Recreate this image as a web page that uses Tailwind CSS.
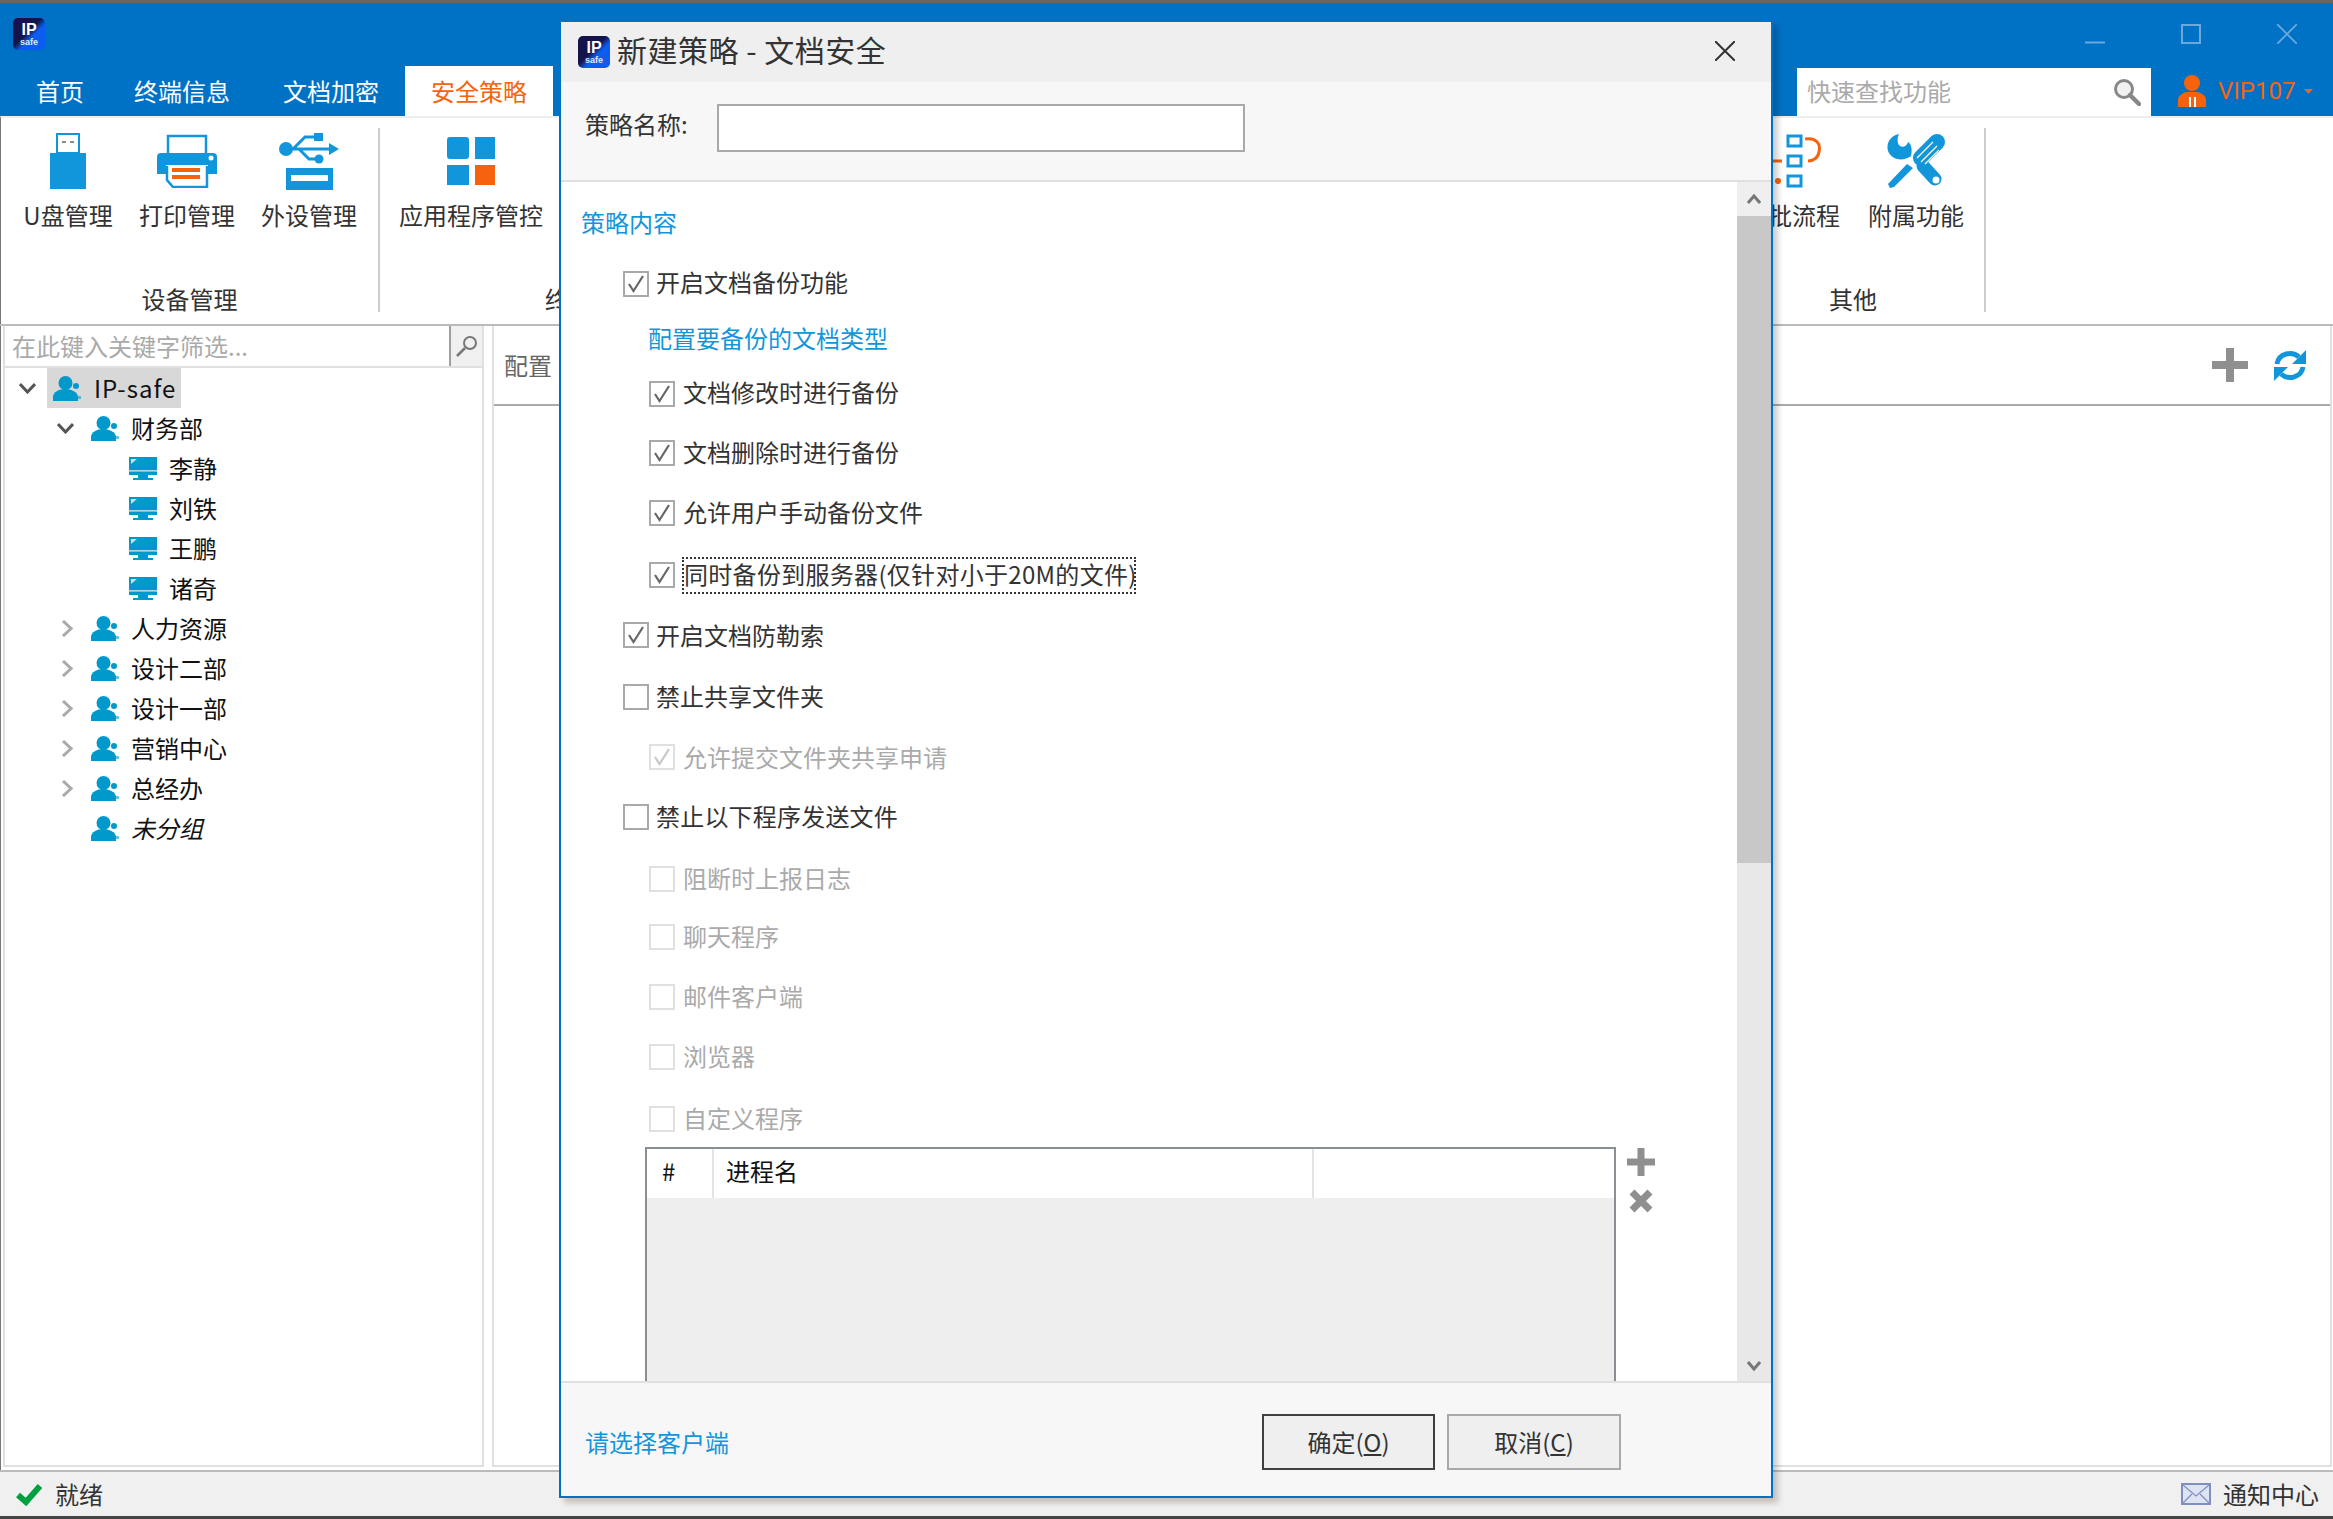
<!DOCTYPE html>
<html lang="zh-CN">
<head>
  <meta charset="UTF-8">
  <title>IP-guard</title>
  <script src="https://cdn.jsdelivr.net/npm/@tailwindcss/browser@4"></script>
</head>
<body class="bg-white font-['Noto_Sans_CJK_SC','Noto_Sans',sans-serif] text-[24px] leading-[32px] text-[#333]">

  <svg width="0" height="0" class="absolute">
    <defs><linearGradient id="logoGrad" x1="0" y1="0" x2="1" y2="1"><stop offset="0.45" stop-color="#14144a"/><stop offset="0.6" stop-color="#0b5cf0"/></linearGradient></defs>
    <symbol id="group" viewBox="0 0 28 25">
      <circle cx="12.5" cy="7" r="7" fill="#0099cc"/>
      <path d="M0 25v-4c0-5 6-8 12-8s13 3 13 8v4z" fill="#0099cc"/>
      <circle cx="23" cy="10" r="3" fill="#0099cc"/>
      <rect x="25" y="20" width="3" height="3" fill="#0099cc" opacity=".6"/>
    </symbol>
    <symbol id="monitor" viewBox="0 0 28 23">
      <rect width="28" height="13" fill="#0099cc"/>
      <rect y="13" width="28" height="1.5" fill="#a8d8ea"/>
      <rect y="14.5" width="28" height="3.5" fill="#0099cc"/>
      <rect x="9" y="18" width="10" height="3" fill="#0099cc"/>
      <rect x="4" y="21" width="20" height="2" fill="#0099cc"/>
      <path d="M2 7V2h6z" fill="#c5e6f2"/>
    </symbol>
    <symbol id="tick" viewBox="0 0 26 26">
      <path d="M6 13l4.500 7L20 5" fill="none" stroke="currentColor" stroke-width="2.200"/>
    </symbol>
  </svg>

  <div class="relative flex h-[1519px] w-[2333px] flex-col overflow-hidden">
    <div class="h-[3px] bg-[#666]"></div>

    <!-- title row -->
    <div class="flex h-[63px] items-start bg-[#0072c6] pl-[13px] pt-[15px]">
      <svg class="h-[32px] w-[32px]" viewBox="0 0 32 32">
        <rect width="32" height="32" rx="5" fill="url(#logoGrad)"/>
        <text x="16" y="17" text-anchor="middle" font-family="Liberation Sans" font-size="16" font-weight="700" fill="#fff">IP</text>
        <text x="16" y="27" text-anchor="middle" font-family="Liberation Sans" font-size="9" font-weight="700" fill="#dfe9ff">safe</text>
      </svg>
      <div class="ml-auto flex text-[#6aa9dc]">
        <svg class="mr-[76px] mt-[6px] h-[20px] w-[20px]" viewBox="0 0 20 20"><path d="M0 18.500h20" stroke="currentColor" stroke-width="2"/></svg>
        <svg class="mr-[76px] mt-[6px] h-[20px] w-[20px]" viewBox="0 0 20 20"><rect x="1" y="1" width="18" height="18" fill="none" stroke="currentColor" stroke-width="2"/></svg>
        <svg class="mr-[36px] mt-[6px] h-[20px] w-[20px]" viewBox="0 0 20 20"><path d="M0 0l20 20M20 0L0 20" stroke="currentColor" stroke-width="1.800"/></svg>
      </div>
    </div>

    <!-- tabs -->
    <div class="flex h-[50px] bg-[#0072c6] text-white">
      <div class="flex items-center pl-[36px]">首页</div>
      <div class="flex items-center pl-[50px]">终端信息</div>
      <div class="flex items-center pl-[53px]">文档加密</div>
      <div class="ml-[26px] flex w-[148px] items-center justify-center bg-white text-[#f7630c]">安全策略</div>
      <div class="ml-auto mt-[2px] flex h-[48px] w-[354px] items-center justify-between bg-white pl-[10px] pr-[10px] text-[#aaa]">
        <span class="pb-[2px]">快速查找功能</span>
        <svg class="h-[28px] w-[28px]" viewBox="0 0 28 28"><circle cx="11" cy="11" r="8.500" fill="#f2f2f2" stroke="#888" stroke-width="3"/><path d="M17 17l9 9" stroke="#888" stroke-width="4.500" stroke-linecap="round"/></svg>
      </div>
      <div class="flex w-[182px] items-center pl-[26px] text-[#f7630c]">
        <svg class="h-[32px] w-[30px]" viewBox="0 0 30 32"><circle cx="15" cy="8" r="8" fill="#f7630c"/><path d="M1 32v-7c0-5 6-8 10-8h8c4 0 10 3 10 8v7z" fill="#f7630c"/><path d="M12 22h2v10h-2zM17 22h2v10h-2z" fill="#fff"/></svg>
        <span class="ml-[11px] font-['Roboto',sans-serif]">VIP107</span>
        <svg class="ml-[9px] h-[5px] w-[9px]" viewBox="0 0 9 5"><path d="M0 0h9L4.500 5z" fill="#f7630c"/></svg>
      </div>
    </div>

    <!-- ribbon -->
    <div class="flex h-[208px] border-l border-t-2 border-l-[#777] border-t-[#eee] bg-white">
      <div class="flex w-[377px] flex-col">
        <div class="flex pl-[19px] pt-[14px]">
          <div class="flex w-[96px] flex-col items-center">
            <div class="flex h-[58px] items-center">
              <svg class="h-[56px] w-[36px]" viewBox="0 0 36 56"><rect y="20" width="36" height="36" fill="#1296db"/><rect x="7" y="1" width="22" height="19" fill="#fff" stroke="#1296db" stroke-width="2"/><path d="M12 9h4M20 9h4" stroke="#8a8a8a" stroke-width="2"/></svg>
            </div>
            <div class="mt-[9px] whitespace-nowrap">U盘管理</div>
          </div>
          <div class="ml-[23px] flex w-[96px] flex-col items-center">
            <div class="flex h-[58px] items-center">
              <svg class="h-[54px] w-[60px]" viewBox="0 0 60 54"><path d="M11 19V2h38v17" fill="none" stroke="#1296db" stroke-width="2.500"/><path d="M4 19h52a4 4 0 0 1 4 4v17h-9v-9H9v9H0V23a4 4 0 0 1 4-4z" fill="#1296db"/><circle cx="54" cy="24" r="2.500" fill="#fff"/><path d="M10 32v14l6 7h34V32" fill="#fff" stroke="#1296db" stroke-width="2.500"/><rect x="15" y="34" width="28" height="4" fill="#f7630c"/><rect x="15" y="41" width="28" height="4" fill="#f7630c"/></svg>
            </div>
            <div class="mt-[9px] whitespace-nowrap">打印管理</div>
          </div>
          <div class="ml-[26px] flex w-[96px] flex-col items-center">
            <div class="flex h-[58px] items-center">
              <svg class="h-[58px] w-[60px]" viewBox="0 0 60 58"><circle cx="7" cy="17" r="7" fill="#1296db"/><path d="M7 17h46M14 17L26 5h10M20 17l10 10h8" fill="none" stroke="#1296db" stroke-width="3"/><path d="M60 17l-10-6v12z" fill="#1296db"/><rect x="35" y="1" width="9" height="8" fill="#1296db"/><circle cx="40" cy="27" r="4.500" fill="#1296db"/><rect x="7" y="36" width="47" height="22" fill="#1296db"/><rect x="12" y="43" width="37" height="6" fill="#fff"/></svg>
            </div>
            <div class="mt-[9px] whitespace-nowrap">外设管理</div>
          </div>
        </div>
        <div class="mt-[52px] text-center">设备管理</div>
      </div>
      <div class="mt-[10px] h-[184px] w-[2px] bg-[#ccc]"></div>
      <div class="flex w-[1342px] flex-col">
        <div class="flex pl-[19px] pt-[14px]">
          <div class="flex w-[144px] flex-col items-center">
            <div class="flex h-[58px] items-center">
              <div class="grid h-[48px] w-[48px] grid-cols-[22px_20px] grid-rows-[22px_20px] gap-x-[6px] gap-y-[6px]">
                <div class="rounded-[3px] bg-[#1296db]"></div>
                <div class="bg-[#1296db]"></div>
                <div class="bg-[#1296db]"></div>
                <div class="bg-[#f7630c]"></div>
              </div>
            </div>
            <div class="mt-[9px] whitespace-nowrap">应用程序管控</div>
          </div>
        </div>
        <div class="mt-[52px] pl-[165px]">终端管控</div>
      </div>
      <div class="flex w-[262px] flex-col">
        <div class="flex pl-[46px] pt-[14px]">
          <div class="flex w-[72px] flex-col items-center">
            <div class="flex h-[58px] items-center">
              <svg class="h-[54px] w-[72px]" viewBox="0 0 72 54"><rect x="20" y="2" width="13" height="10" fill="#fff" stroke="#1296db" stroke-width="3"/><rect x="20" y="22" width="13" height="10" fill="#fff" stroke="#1296db" stroke-width="3"/><rect x="20" y="42" width="13" height="10" fill="#fff" stroke="#1296db" stroke-width="3"/><path d="M37 5c12-2 16 6 14 13-1 6-6 9-11 9" fill="none" stroke="#f7630c" stroke-width="3"/><path d="M5 27h9" stroke="#f7630c" stroke-width="3"/><circle cx="10" cy="47" r="3" fill="#f7630c"/></svg>
            </div>
            <div class="mt-[9px] whitespace-nowrap">批流程</div>
          </div>
          <div class="ml-[28px] flex w-[96px] flex-col items-center">
            <div class="flex h-[58px] items-center">
              <svg class="h-[56px] w-[60px]" viewBox="0 0 60 56"><path d="M13 1C3 3-1 13 3 20c5 8 15 8 22 3 2-9-1-13-3-14-1 4-5 6-8 4-3-2-3-8-1-12z" fill="#1296db"/><path d="M37 33l12 13" stroke="#1296db" stroke-width="13" stroke-linecap="round"/><circle cx="50" cy="47" r="3.500" fill="#fff"/><path d="M4 55l-2-4 19-20 6 4-19 19z" fill="#1296db"/><path d="M35 25L51 9" stroke="#1296db" stroke-width="16" stroke-linecap="round"/><path d="M31 25l16-16M35 29l16-16M39 31l14-14" stroke="#fff" stroke-width="1.200"/></svg>
            </div>
            <div class="mt-[9px] whitespace-nowrap">附属功能</div>
          </div>
        </div>
        <div class="mt-[52px] pl-[107px]">其他</div>
      </div>
      <div class="mt-[10px] h-[184px] w-[2px] bg-[#ccc]"></div>
    </div>
    <div class="h-[2px] bg-[#bbb]"></div>

    <!-- main -->
    <div class="flex h-[1144px] border-l border-l-[#777] pb-[3px] pl-[2px] pr-[1px]">
      <div class="flex w-[481px] flex-col border-x-2 border-b-2 border-[#e0e0e0]">
        <div class="flex h-[42px] border-b-2 border-[#e0e0e0]">
          <div class="flex-1 pl-[7px] leading-[40px] text-[#aaa]">在此键入关键字筛选...</div>
          <div class="flex w-[33px] items-center justify-center border-l-2 border-[#a0a0a0] bg-[#f0f0f0]">
            <svg class="h-[22px] w-[22px]" viewBox="0 0 22 22"><circle cx="14" cy="8" r="6" fill="none" stroke="#777" stroke-width="2"/><path d="M9 13l-8 8" stroke="#777" stroke-width="2.500"/></svg>
          </div>
        </div>
        <div class="text-[#111]">
          <div class="flex h-[40px] items-center">
            <svg class="ml-[14px] h-[12px] w-[17px] text-[#555]" viewBox="0 0 17 12"><path d="M1 2l7.500 8L16 2" fill="none" stroke="currentColor" stroke-width="3"/></svg>
            <div class="ml-[11px] flex h-full w-[134px] items-center bg-[#d8d8d8] pl-[6px]">
              <svg class="h-[25px] w-[28px]"><use href="#group"/></svg>
              <span class="ml-[13px] tracking-[1px]">IP-safe</span>
            </div>
          </div>
          <div class="flex h-[40px] items-center">
            <svg class="ml-[52px] h-[12px] w-[17px] text-[#555]" viewBox="0 0 17 12"><path d="M1 2l7.500 8L16 2" fill="none" stroke="currentColor" stroke-width="3"/></svg>
            <svg class="ml-[17px] h-[25px] w-[28px]"><use href="#group"/></svg>
            <span class="ml-[12px]">财务部</span>
          </div>
          <div class="flex h-[40px] items-center pl-[124px]">
            <svg class="h-[23px] w-[28px]"><use href="#monitor"/></svg>
            <span class="ml-[12px]">李静</span>
          </div>
          <div class="flex h-[40px] items-center pl-[124px]">
            <svg class="h-[23px] w-[28px]"><use href="#monitor"/></svg>
            <span class="ml-[12px]">刘铁</span>
          </div>
          <div class="flex h-[40px] items-center pl-[124px]">
            <svg class="h-[23px] w-[28px]"><use href="#monitor"/></svg>
            <span class="ml-[12px]">王鹏</span>
          </div>
          <div class="flex h-[40px] items-center pl-[124px]">
            <svg class="h-[23px] w-[28px]"><use href="#monitor"/></svg>
            <span class="ml-[12px]">诸奇</span>
          </div>
          <div class="flex h-[40px] items-center">
            <svg class="ml-[56px] h-[17px] w-[12px] text-[#aaa]" viewBox="0 0 12 17"><path d="M2 1l8 7.500L2 16" fill="none" stroke="currentColor" stroke-width="3"/></svg>
            <svg class="ml-[18px] h-[25px] w-[28px]"><use href="#group"/></svg>
            <span class="ml-[12px]">人力资源</span>
          </div>
          <div class="flex h-[40px] items-center">
            <svg class="ml-[56px] h-[17px] w-[12px] text-[#aaa]" viewBox="0 0 12 17"><path d="M2 1l8 7.500L2 16" fill="none" stroke="currentColor" stroke-width="3"/></svg>
            <svg class="ml-[18px] h-[25px] w-[28px]"><use href="#group"/></svg>
            <span class="ml-[12px]">设计二部</span>
          </div>
          <div class="flex h-[40px] items-center">
            <svg class="ml-[56px] h-[17px] w-[12px] text-[#aaa]" viewBox="0 0 12 17"><path d="M2 1l8 7.500L2 16" fill="none" stroke="currentColor" stroke-width="3"/></svg>
            <svg class="ml-[18px] h-[25px] w-[28px]"><use href="#group"/></svg>
            <span class="ml-[12px]">设计一部</span>
          </div>
          <div class="flex h-[40px] items-center">
            <svg class="ml-[56px] h-[17px] w-[12px] text-[#aaa]" viewBox="0 0 12 17"><path d="M2 1l8 7.500L2 16" fill="none" stroke="currentColor" stroke-width="3"/></svg>
            <svg class="ml-[18px] h-[25px] w-[28px]"><use href="#group"/></svg>
            <span class="ml-[12px]">营销中心</span>
          </div>
          <div class="flex h-[40px] items-center">
            <svg class="ml-[56px] h-[17px] w-[12px] text-[#aaa]" viewBox="0 0 12 17"><path d="M2 1l8 7.500L2 16" fill="none" stroke="currentColor" stroke-width="3"/></svg>
            <svg class="ml-[18px] h-[25px] w-[28px]"><use href="#group"/></svg>
            <span class="ml-[12px]">总经办</span>
          </div>
          <div class="flex h-[40px] items-center pl-[86px]">
            <svg class="h-[25px] w-[28px]"><use href="#group"/></svg>
            <span class="ml-[12px] italic">未分组</span>
          </div>
        </div>
      </div>
      <div class="ml-[8px] flex flex-1 flex-col border-x-2 border-b-2 border-[#e0e0e0]">
        <div class="flex h-[80px] items-center border-b-2 border-[#aaa] pl-[10px] pr-[24px] text-[#666]">
          <span>配置</span>
          <svg class="ml-auto h-[34px] w-[36px]" viewBox="0 0 36 34"><path d="M14 0h8v13h14v8H22v13h-8V21H0v-8h14z" fill="#8f8f8f"/></svg>
          <svg class="ml-[26px] h-[31px] w-[32px]" viewBox="0 0 32 31"><path d="M3 14A13 12 0 0 1 25 7" fill="none" stroke="#1296db" stroke-width="5"/><path d="M32 0v14H18z" fill="#1296db"/><path d="M29 17A13 12 0 0 1 7 24" fill="none" stroke="#1296db" stroke-width="5"/><path d="M0 31V17h14z" fill="#1296db"/></svg>
        </div>
      </div>
    </div>
    <div class="h-[2px] bg-[#bbb]"></div>

    <!-- status bar -->
    <div class="flex h-[44px] items-center bg-[#f0f0f0] pl-[15px] pr-[14px]">
      <svg class="h-[23px] w-[28px]" viewBox="0 0 28 23"><path d="M3 12l8 7L25 3" fill="none" stroke="#00a040" stroke-width="6"/></svg>
      <span class="ml-[12px]">就绪</span>
      <svg class="ml-auto h-[22px] w-[30px]" viewBox="0 0 30 22"><rect x="1" y="1" width="28" height="20" fill="#dde3f3" stroke="#7f8fbf" stroke-width="2"/><path d="M2 2l13 11L28 2M2 20l9-9M28 20l-9-9" fill="none" stroke="#7f8fbf" stroke-width="1.200"/></svg>
      <span class="ml-[12px]">通知中心</span>
    </div>
    <div class="h-[3px] bg-[#444]"></div>

    <!-- modal dialog -->
    <div class="absolute left-[559px] top-[20px] flex h-[1478px] w-[1214px] flex-col border-2 border-[#0072c6] bg-white shadow-[5px_5px_6px_rgba(0,0,0,0.2)]">
      <div class="flex h-[60px] items-center justify-between bg-[#efefef] pl-[17px] pr-[36px]">
        <div class="flex items-center">
          <svg class="h-[32px] w-[32px]" viewBox="0 0 32 32">
            <rect width="32" height="32" rx="5" fill="url(#logoGrad)"/>
            <text x="16" y="17" text-anchor="middle" font-family="Liberation Sans" font-size="16" font-weight="700" fill="#fff">IP</text>
            <text x="16" y="27" text-anchor="middle" font-family="Liberation Sans" font-size="9" font-weight="700" fill="#dfe9ff">safe</text>
          </svg>
          <span class="ml-[7px] pb-[6px] text-[30px] tracking-[0.5px]">新建策略 - 文档安全</span>
        </div>
        <svg class="mb-[3px] h-[20px] w-[20px]" viewBox="0 0 20 20"><path d="M0 0l20 20M20 0L0 20" stroke="#333" stroke-width="2"/></svg>
      </div>
      <div class="flex h-[100px] border-b-2 border-[#e0e0e0] bg-[#f7f7f7] pl-[24px] pt-[22px]">
        <span class="w-[132px] leading-[40px]">策略名称:</span>
        <div class="h-[48px] w-[528px] border-2 border-[#a9a9a9] bg-white"></div>
      </div>
      <div class="flex h-[1199px] overflow-hidden">
        <div class="w-[1176px] overflow-hidden pl-[20px] pt-[24px] whitespace-nowrap">
          <div class="text-[#1296db]">策略内容</div>

          <div class="ml-[42px] mt-[33px] flex h-[26px] items-center">
            <div class="h-[26px] w-[26px] border-2 border-[#a9a9a9] text-[#666]"><svg class="-m-[2px] h-[26px] w-[26px]"><use href="#tick"/></svg></div>
            <span class="ml-[7px] pb-[5px]">开启文档备份功能</span>
          </div>
          <div class="ml-[67px] mt-[28px] h-[26px] leading-[26px] text-[#1296db]">配置要备份的文档类型</div>
          <div class="ml-[68px] mt-[30px] flex h-[26px] items-center">
            <div class="h-[26px] w-[26px] border-2 border-[#a9a9a9] text-[#666]"><svg class="-m-[2px] h-[26px] w-[26px]"><use href="#tick"/></svg></div>
            <span class="ml-[8px] pb-[5px]">文档修改时进行备份</span>
          </div>
          <div class="ml-[68px] mt-[33px] flex h-[26px] items-center">
            <div class="h-[26px] w-[26px] border-2 border-[#a9a9a9] text-[#666]"><svg class="-m-[2px] h-[26px] w-[26px]"><use href="#tick"/></svg></div>
            <span class="ml-[8px] pb-[3px]">文档删除时进行备份</span>
          </div>
          <div class="ml-[68px] mt-[34px] flex h-[26px] items-center">
            <div class="h-[26px] w-[26px] border-2 border-[#a9a9a9] text-[#666]"><svg class="-m-[2px] h-[26px] w-[26px]"><use href="#tick"/></svg></div>
            <span class="ml-[8px] pb-[2px]">允许用户手动备份文件</span>
          </div>
          <div class="ml-[68px] mt-[36px] flex h-[26px] items-center">
            <div class="h-[26px] w-[26px] border-2 border-[#a9a9a9] text-[#666]"><svg class="-m-[2px] h-[26px] w-[26px]"><use href="#tick"/></svg></div>
            <span class="ml-[7px] flex h-[37px] w-[454px] shrink-0 items-center border-2 border-dotted border-[#333] pb-[2px] tracking-[0.3px]">同时备份到服务器(仅针对小于20M的文件)</span>
          </div>
          <div class="ml-[42px] mt-[34px] flex h-[26px] items-center">
            <div class="h-[26px] w-[26px] border-2 border-[#a9a9a9] text-[#666]"><svg class="-m-[2px] h-[26px] w-[26px]"><use href="#tick"/></svg></div>
            <span class="ml-[7px] pb-[1px]">开启文档防勒索</span>
          </div>
          <div class="ml-[42px] mt-[36px] flex h-[26px] items-center">
            <div class="h-[26px] w-[26px] border-2 border-[#a9a9a9]"></div>
            <span class="ml-[7px] pb-[2px]">禁止共享文件夹</span>
          </div>
          <div class="ml-[68px] mt-[34px] flex h-[26px] items-center text-[#aaa]">
            <div class="h-[26px] w-[26px] border-2 border-[#e0e0e0] text-[#c8c8c8]"><svg class="-m-[2px] h-[26px] w-[26px]"><use href="#tick"/></svg></div>
            <span class="ml-[8px] pb-[1px]">允许提交文件夹共享申请</span>
          </div>
          <div class="ml-[42px] mt-[34px] flex h-[26px] items-center">
            <div class="h-[26px] w-[26px] border-2 border-[#a9a9a9]"></div>
            <span class="ml-[7px] pb-[2px] tracking-[0.2px]">禁止以下程序发送文件</span>
          </div>
          <div class="ml-[68px] mt-[36px] flex h-[26px] items-center text-[#aaa]">
            <div class="h-[26px] w-[26px] border-2 border-[#e0e0e0]"></div>
            <span class="ml-[8px] pb-[2px]">阻断时上报日志</span>
          </div>
          <div class="ml-[68px] mt-[32px] flex h-[26px] items-center text-[#aaa]">
            <div class="h-[26px] w-[26px] border-2 border-[#e0e0e0]"></div>
            <span class="ml-[8px] pb-[2px]">聊天程序</span>
          </div>
          <div class="ml-[68px] mt-[34px] flex h-[26px] items-center text-[#aaa]">
            <div class="h-[26px] w-[26px] border-2 border-[#e0e0e0]"></div>
            <span class="ml-[8px] pb-[2px]">邮件客户端</span>
          </div>
          <div class="ml-[68px] mt-[34px] flex h-[26px] items-center text-[#aaa]">
            <div class="h-[26px] w-[26px] border-2 border-[#e0e0e0]"></div>
            <span class="ml-[8px] pb-[2px]">浏览器</span>
          </div>
          <div class="ml-[68px] mt-[36px] flex h-[26px] items-center text-[#aaa]">
            <div class="h-[26px] w-[26px] border-2 border-[#e0e0e0]"></div>
            <span class="ml-[8px] pb-[2px]">自定义程序</span>
          </div>

          <div class="ml-[64px] mt-[15px] flex">
            <div class="h-[260px] w-[971px] border-x-2 border-t-2 border-[#8a8f96] bg-[#eee]">
              <div class="flex h-[49px] items-center bg-white text-[#111]">
                <div class="h-full w-[67px] border-r-2 border-[#e4e4e4] pl-[15px] leading-[44px]">#</div>
                <div class="h-full w-[600px] border-r-2 border-[#e4e4e4] pl-[12px] leading-[44px]">进程名</div>
              </div>
            </div>
            <div class="ml-[11px] flex flex-col">
              <svg class="mt-[1px] h-[28px] w-[28px]" viewBox="0 0 28 28"><path d="M10.500 0h7v10.500H28v7H17.500V28h-7V17.500H0v-7h10.500z" fill="#8f8f8f"/></svg>
              <svg class="ml-[2px] mt-[13px] h-[24px] w-[24px]" viewBox="0 0 24 24"><path d="M3 3l18 18M21 3L3 21" stroke="#8f8f8f" stroke-width="7"/></svg>
            </div>
          </div>
        </div>
        <div class="flex w-[34px] flex-col bg-[#e8e8e8]">
          <div class="flex h-[34px] items-center justify-center bg-[#efefef]">
            <svg class="h-[10px] w-[14px]" viewBox="0 0 14 10"><path d="M1 9l6-7 6 7" fill="none" stroke="#777" stroke-width="3"/></svg>
          </div>
          <div class="h-[647px] bg-[#c8c8c8]"></div>
          <div class="flex flex-1 items-end justify-center pb-[10px]">
            <svg class="h-[10px] w-[14px]" viewBox="0 0 14 10"><path d="M1 1l6 7 6-7" fill="none" stroke="#777" stroke-width="3"/></svg>
          </div>
        </div>
      </div>
      <div class="flex h-[115px] items-start border-t-2 border-[#e0e0e0] bg-[#f7f7f7] pl-[24px] pt-[31px]">
        <span class="mt-[12px] text-[#1296db]">请选择客户端</span>
        <div class="ml-[533px] flex h-[56px] w-[173px] items-center justify-center border-2 border-[#404040] bg-[#efefef]">确定(<span class="underline">O</span>)</div>
        <div class="ml-[12px] flex h-[56px] w-[174px] items-center justify-center border-2 border-[#a9a9a9] bg-[#efefef]">取消(<span class="underline">C</span>)</div>
      </div>
    </div>
  </div>
</body>
</html>
